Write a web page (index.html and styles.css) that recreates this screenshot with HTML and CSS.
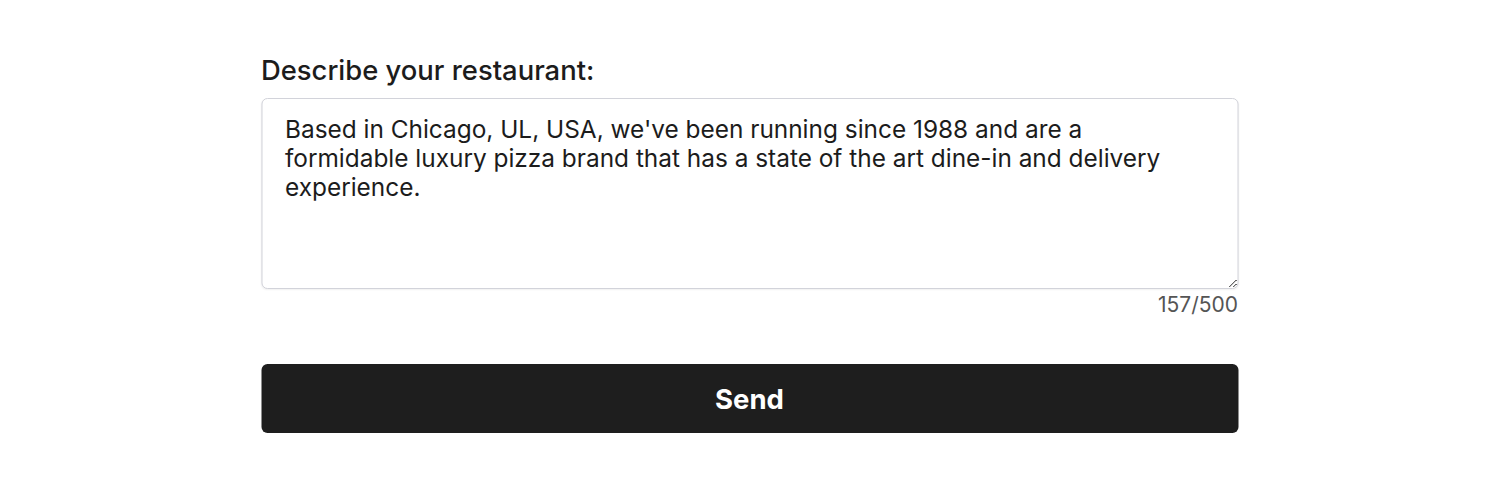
FILE: index.html
```html
<!DOCTYPE html>
<html>
<head>
<meta charset="utf-8">
<link rel="stylesheet" href="styles.css">
</head>
<body>
<main class="form">
  <label class="label" for="desc">Describe your restaurant:</label>
  <textarea id="desc" class="field">Based in Chicago, UL, USA, we've been running since 1988 and are a formidable luxury pizza brand that has a state of the art dine-in and delivery experience.</textarea>
  <div class="counter">157/500</div>
  <button class="send">Send</button>
</main>
</body>
</html>
```
FILE: styles.css
```css
html, body {
  margin: 0;
  padding: 0;
  background: #ffffff;
  font-family: Inter, "Noto Sans", sans-serif;
  color: #1c1c1c;
}
.form {
  width: 977px;
  margin: 0 auto;
  padding-top: 54px;
  display: flex;
  flex-direction: column;
  transform: translateX(-0.5px);
}
.label {
  font-size: 27.4px;
  font-weight: 500;
  line-height: 32px;
  margin-bottom: 12px;
  color: #1c1c1c;
}
.field {
  box-sizing: border-box;
  width: 977px;
  height: 191px;
  border: 1px solid #d2d3da;
  border-radius: 6px;
  padding: 16px 60px 16px 23px;
  font-family: Inter, "Noto Sans", sans-serif;
  font-size: 24.4px;
  line-height: 29px;
  color: #1c1c1c;
  box-shadow: 0 1px 2px rgba(0,0,0,0.06);
  resize: vertical;
  outline: none;
}
.counter {
  text-align: right;
  font-size: 21px;
  line-height: 28px;
  color: #555555;
  margin-top: 2px;
}
.send {
  margin-top: 45px;
  height: 69px;
  border: none;
  border-radius: 6px;
  background: #1e1e1e;
  color: #ffffff;
  font-family: Inter, "Noto Sans", sans-serif;
  font-size: 27.5px;
  font-weight: 700;
}
```
